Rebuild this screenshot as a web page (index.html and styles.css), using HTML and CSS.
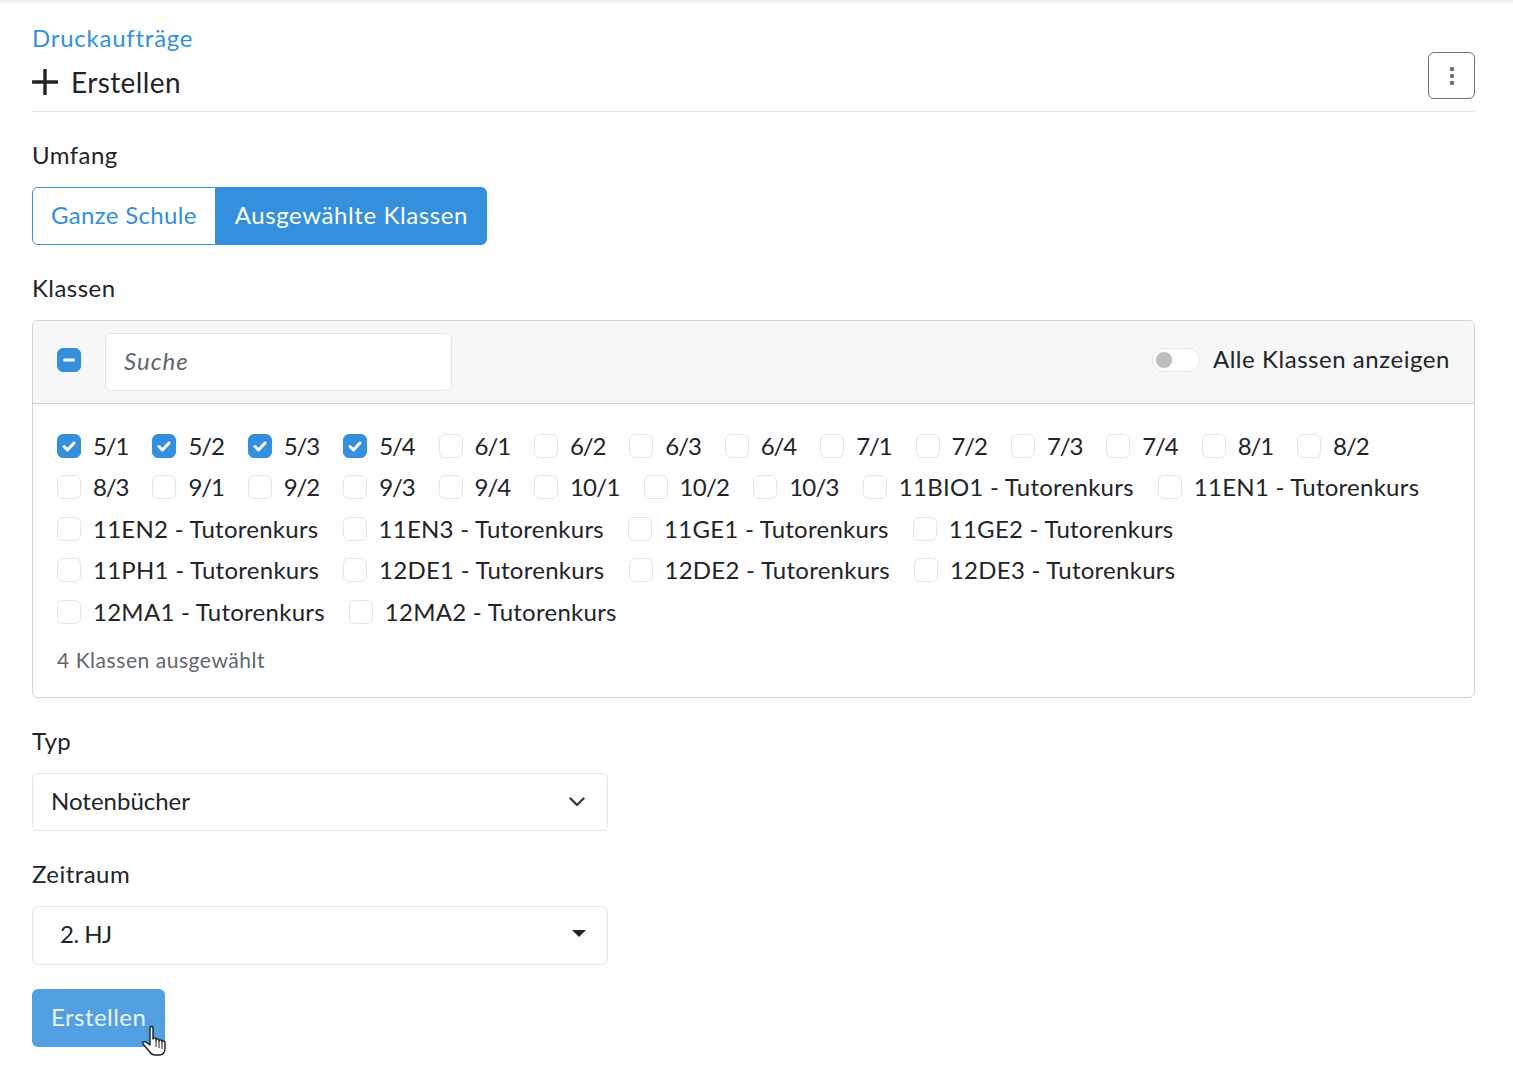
FILE: index.html
```html
<!DOCTYPE html>
<html lang="de">

<head>
    <meta charset="UTF-8">
    <meta name="viewport" content="width=device-width, initial-scale=1.0">
    <title>Druckaufträge</title>
    <link rel="stylesheet" href="styles.css">
</head>

<body>
    <div class="topshadow"></div>
    <div class="page">
        <a class="crumb" href="#">Druckaufträge</a>
        <div class="head">
            <h1 class="title">
                <svg class="plus" viewBox="0 0 26 26" width="26" height="26"><path d="M13 1v24M1 13h24" fill="none" stroke="#212529" stroke-width="3.4" stroke-linecap="round"/></svg>
                Erstellen
            </h1>
            <button class="menu-btn">
                <svg viewBox="0 0 6 20" width="6" height="20"><circle cx="3" cy="3" r="2.3" fill="#6c757d"/><circle cx="3" cy="10" r="2.3" fill="#6c757d"/><circle cx="3" cy="17" r="2.3" fill="#6c757d"/></svg>
            </button>
        </div>

        <div class="group group-first">
            <label class="lbl">Umfang</label>
            <div class="btn-group">
                <span class="seg">Ganze Schule</span>
                <span class="seg active">Ausgewählte Klassen</span>
            </div>
        </div>

        <div class="group">
            <label class="lbl">Klassen</label>
            <div class="card">
                <div class="card-head">
                    <span class="box on">
                        <svg viewBox="0 0 24 24" width="24" height="24"><path d="M7.5 12h9" stroke="#fff" stroke-width="3" stroke-linecap="round"/></svg>
                    </span>
                    <input class="search" type="text" placeholder="Suche">
                    <span class="toggle"><i></i></span>
                    <span class="toggle-text">Alle Klassen anzeigen</span>
                </div>
                <div class="card-body">
                    <ul class="list" id="list"></ul>
                    <p class="count">4 Klassen ausgewählt</p>
                </div>
            </div>
        </div>

        <div class="group">
            <label class="lbl">Typ</label>
            <div class="select">
                <span class="sel-text">Notenbücher</span>
                <svg class="chev" viewBox="0 0 16 10" width="16" height="10"><path d="M1.5 1.5 8 8l6.5-6.5" fill="none" stroke="#343a40" stroke-width="2.4" stroke-linecap="round" stroke-linejoin="round"/></svg>
            </div>
        </div>

        <div class="group">
            <label class="lbl">Zeitraum</label>
            <div class="select select-alt">
                <span class="sel-text hj">2. HJ</span>
                <span class="caret"></span>
            </div>
        </div>

        <span class="submit">Erstellen
            <svg class="cursor" viewBox="0 0 26 34" width="26" height="34"><path d="M8 3c0-2 3-2 3 0v11c0-1.500 3-1.500 3 0v1c0-1.500 3-1.500 3 0v1c0-1.500 3-1.500 3 0v1c0-1.500 3-1.500 3 0v6c0 4-2 7-6 7h-4c-3 0-4-1-6-4l-6-7c-1-2 1-3 3-2l4 3z" fill="#fff" stroke="#1c1f22" stroke-width="1.400" stroke-linejoin="round"/><path d="M14 15v7M17 16v7M20 17v7" stroke="#1c1f22" stroke-width="1" fill="none"/></svg>
        </span>
    </div>
    <script>
        var names = ["5/1","5/2","5/3","5/4","6/1","6/2","6/3","6/4","7/1","7/2","7/3","7/4","8/1","8/2","8/3","9/1","9/2","9/3","9/4","10/1","10/2","10/3",
            "11BIO1 - Tutorenkurs","11EN1 - Tutorenkurs","11EN2 - Tutorenkurs","11EN3 - Tutorenkurs","11GE1 - Tutorenkurs","11GE2 - Tutorenkurs",
            "11PH1 - Tutorenkurs","12DE1 - Tutorenkurs","12DE2 - Tutorenkurs","12DE3 - Tutorenkurs","12MA1 - Tutorenkurs","12MA2 - Tutorenkurs"];
        var oList = document.getElementById("list");
        var check = '<svg viewBox="0 0 24 24" width="24" height="24"><path d="M7 12.500l3.500 3.500 6.500-7" fill="none" stroke="#fff" stroke-width="3" stroke-linecap="round" stroke-linejoin="round"/></svg>';

        for (var i = 0; i < names.length; i++) {
            var oLi = document.createElement("li");
            oLi.className = "item";
            if (names[i].length == 3) oLi.className = "item short";
            if (names[i].length == 4) oLi.className = "item mid";
            oLi.innerHTML = '<span class="box' + (i < 4 ? " on" : "") + '">' + (i < 4 ? check : "") + '</span><span>' + names[i] + '</span>';
            oList.appendChild(oLi);
        }
    </script>
</body>

</html>
```

FILE: styles.css
```css
* {
    margin: 0;
    padding: 0;
    box-sizing: border-box;
}

body {
    font-family: "Lato", "Liberation Sans", sans-serif;
    font-size: 24px;
    line-height: 36px;
    color: #212529;
    background-color: #fff;
}

.topshadow {
    height: 5px;
    background: linear-gradient(#e9e9e9, #fff);
}

.page {
    padding: 15px 38px 16px 32px;
}

.crumb {
    display: block;
    color: #3490dc;
    text-decoration: none;
    letter-spacing: .75px;
}

.head {
    display: flex;
    justify-content: space-between;
    align-items: flex-end;
    height: 60px;
    margin-top: -4px;
    padding-bottom: 12px;
    border-bottom: 1px solid #e2e4e6;
}

.title {
    display: flex;
    align-items: center;
    gap: 13px;
    font-size: 28px;
    font-weight: 400;
    line-height: 40px;
    letter-spacing: .4px;
    margin-bottom: -3px;
}

.menu-btn {
    width: 47px;
    height: 47px;
    background-color: #fff;
    border: 1px solid #6c757d;
    border-radius: 6px;
    display: flex;
    align-items: center;
    justify-content: center;
}

.group {
    margin-top: 25px;
}

.lbl {
    display: block;
    margin-bottom: 14px;
    letter-spacing: .45px;
}

.btn-group {
    display: inline-flex;
    height: 58px;
}

.seg {
    padding: 0 18px;
    line-height: 54px;
    border: 1px solid #3490dc;
    color: #3490dc;
    border-radius: 6px 0 0 6px;
    letter-spacing: .33px;
}

.seg.active {
    background-color: #3490dc;
    color: #fff;
    border-radius: 0 6px 6px 0;
    letter-spacing: .6px;
}

.card {
    border: 1px solid #d4d4d4;
    border-radius: 6px;
}

.card-head {
    display: flex;
    align-items: center;
    height: 83px;
    padding: 0 24px;
    background-color: #f7f7f7;
    border-bottom: 1px solid #d4d4d4;
    border-radius: 6px 6px 0 0;
}

.box {
    flex: none;
    display: block;
    width: 24px;
    height: 24px;
    background-color: #fff;
    border: 1px solid #e3e5e8;
    border-radius: 6px;
}

.card-head .box,
.toggle {
    margin-bottom: 4px;
}

.toggle-text {
    margin-bottom: 6px;
}

.box.on {
    background-color: #3490dc;
    border-color: #3490dc;
}

.box svg {
    display: block;
    margin: -1px;
}

.search {
    width: 347px;
    height: 58px;
    margin-left: 24px;
    padding: 0 18px 3px;
    font: italic 24px "Lato", "Liberation Sans", sans-serif;
    letter-spacing: 1px;
    border: 1px solid #e3e5e8;
    border-radius: 6px;
    outline: none;
}

.search::placeholder {
    color: #5f666d;
    opacity: 1;
}

.toggle {
    margin-left: auto;
    width: 48px;
    height: 24px;
    background-color: #fff;
    border: 1px solid #e3e5e8;
    border-radius: 12px;
    padding: 3px;
}

.toggle i {
    display: block;
    width: 16px;
    height: 16px;
    border-radius: 50%;
    background-color: #bdbdbd;
}

.toggle-text {
    margin-left: 13px;
    letter-spacing: .55px;
}

.card-body {
    padding: 21px 24px 22px;
}

.list {
    display: flex;
    flex-wrap: wrap;
    list-style: none;
    column-gap: 24px;
}

.item {
    display: flex;
    align-items: center;
    gap: 12px;
    height: 41.5px;
    letter-spacing: .26px;
}

.item.short {
    letter-spacing: -1.1px;
}

.item.mid {
    letter-spacing: -.75px;
}

.count {
    margin-top: 11px;
    font-size: 21px;
    line-height: 31px;
    color: #5f666d;
    letter-spacing: .55px;
}

.select {
    display: flex;
    align-items: center;
    width: 576px;
    height: 58px;
    padding: 0 18px;
    border: 1px solid #e3e5e8;
    border-radius: 6px;
}

.select-alt {
    height: 59px;
    padding-left: 27px;
}

.sel-text {
    margin-bottom: 2px;
}

.hj {
    letter-spacing: -.5px;
}

.chev {
    margin-left: auto;
    margin-right: 4px;
}

.caret {
    margin-left: auto;
    margin-right: 3px;
    margin-bottom: 4px;
    border-top: 7px solid #212529;
    border-left: 7px solid transparent;
    border-right: 7px solid transparent;
}

.submit {
    position: relative;
    display: inline-block;
    margin-top: 24px;
    height: 58px;
    padding: 0 19px;
    line-height: 56px;
    color: #eaf4fc;
    background-color: #52a0e1;
    border-radius: 6px;
    letter-spacing: .45px;
}

.cursor {
    position: absolute;
    left: 110px;
    top: 36px;
}
```
